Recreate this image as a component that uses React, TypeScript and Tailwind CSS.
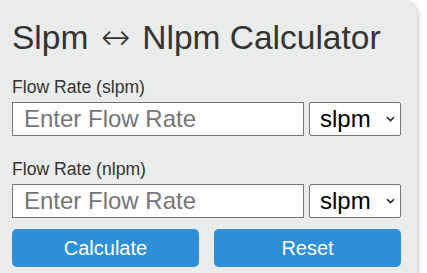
import React from "react";

export default function App() {
  const font = { fontFamily: '"Liberation Sans", Arial, sans-serif' };
  return (
    <div className="w-[427px] h-[273px] bg-white overflow-hidden" style={font}>
      <div className="w-[417px] h-[290px] bg-[#eaebeb] rounded-tr-[16px] shadow-[2px_0_4px_rgba(0,0,0,0.18)] pl-[12px] pr-[16px] pt-[19px]">
        <h1 className="text-[33.5px] leading-[37px] text-[#333333] font-normal m-0 whitespace-nowrap">
          Slpm <span className="font-['DejaVu_Sans'] font-light text-[35px] mx-[3px]">↔</span> Nlpm Calculator
        </h1>
        <div className="mt-[21px] flex flex-col">
          <label className="text-[17.6px] leading-[20px] text-[#333333]">Flow Rate (slpm)</label>
          <Row />
          <label className="mt-[23px] text-[17.6px] leading-[20px] text-[#333333]">Flow Rate (nlpm)</label>
          <Row />
          <div className="mt-[11px] flex gap-[15px]">
            <button className="flex-1 h-[38px] rounded-[5px] bg-[#2d8fd8] text-white text-[20px] leading-[24px]">
              Calculate
            </button>
            <button className="flex-1 h-[38px] rounded-[5px] bg-[#2d8fd8] text-white text-[20px] leading-[24px]">
              Reset
            </button>
          </div>
        </div>
      </div>
    </div>
  );
}

function Row() {
  return (
    <div className="mt-[5px] flex gap-[5px]">
      <input
        type="text"
        placeholder="Enter Flow Rate"
        className="w-[292px] h-[34px] bg-white border border-[#767676] pl-[11px] text-[24px] leading-[28px] text-black placeholder:text-[#757575] outline-none"
      />
      <div className="relative w-[92px] h-[34px]">
        <select className="appearance-none w-full h-full bg-white border border-[#767676] rounded-[2px] pl-[10px] text-[24px] leading-[28px] text-black outline-none">
          <option>slpm</option>
        </select>
        <svg
          className="absolute right-[6px] top-[14px] pointer-events-none"
          width="9"
          height="6"
          viewBox="0 0 9 6"
        >
          <path d="M1 1.2 L4.5 4.6 L8 1.2" fill="none" stroke="#222" strokeWidth="1.6" />
        </svg>
      </div>
    </div>
  );
}
